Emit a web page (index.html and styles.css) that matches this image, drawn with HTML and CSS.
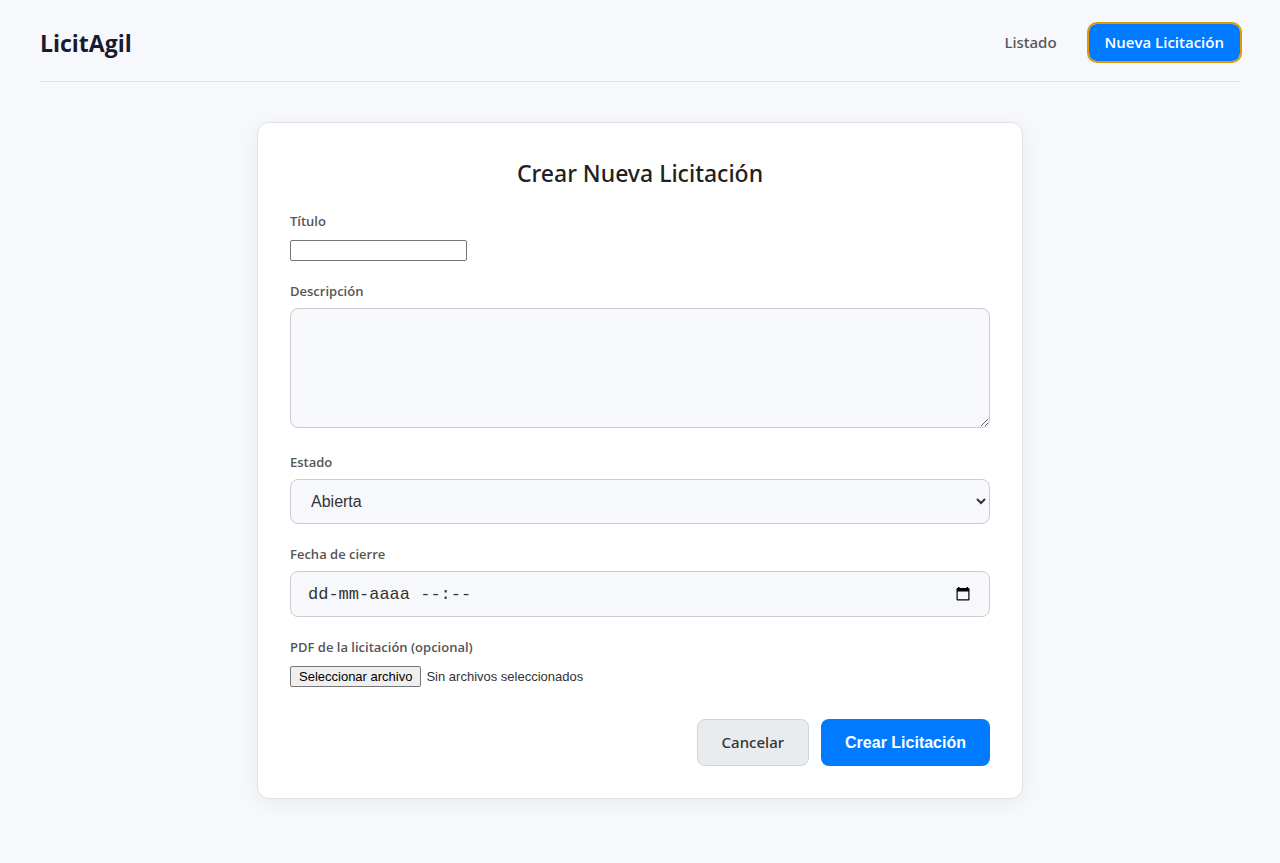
FILE: index.html
```html
<!DOCTYPE html>
<html lang="es">
<head>
<meta charset="utf-8">
<meta name="viewport" content="width=device-width, initial-scale=1">
<title>LicitAgil</title>
<link rel="stylesheet" href="styles.css">
</head>
<body>
<header class="header">
  <h1 class="logo">LicitAgil</h1>
  <nav class="nav">
    <a class="nav-link" href="#listado">Listado</a>
    <a class="nav-link nav-link-primary" href="#nueva">Nueva Licitación</a>
  </nav>
</header>
<main class="card">
  <h2 class="card-title">Crear Nueva Licitación</h2>
  <form class="form">
    <div class="field">
      <label class="label" for="titulo">Título</label>
      <div class="inline-control"><input class="plain-input" id="titulo" type="text"></div>
    </div>
    <div class="field">
      <label class="label" for="descripcion">Descripción</label>
      <textarea class="control textarea" id="descripcion"></textarea>
    </div>
    <div class="field">
      <label class="label" for="estado">Estado</label>
      <select class="control select" id="estado">
        <option>Abierta</option>
        <option>Cerrada</option>
      </select>
    </div>
    <div class="field">
      <label class="label" for="fecha">Fecha de cierre</label>
      <div class="control date">
        <input class="date-input" id="fecha" type="text" placeholder="dd-mm-aaaa --:--">
        <button class="date-button" type="button" aria-label="Abrir calendario">
          <svg width="16" height="16" viewBox="0 0 16 16" aria-hidden="true"><path fill-rule="evenodd" d="M3 1h1.500v1h7V1H13v1h.5a1 1 0 0 1 1 1v10.500a1 1 0 0 1-1 1h-11a1 1 0 0 1-1-1V3a1 1 0 0 1 1-1H3zM2.700 5.500v7.800h10.600V5.500z"/></svg>
        </button>
      </div>
    </div>
    <div class="field">
      <label class="label" for="pdf">PDF de la licitación (opcional)</label>
      <div class="inline-control file">
        <input class="file-input" id="pdf" type="file" accept="application/pdf">
        <label class="file-button" for="pdf">Seleccionar archivo</label>
        <span>Sin archivos seleccionados</span>
      </div>
    </div>
    <div class="actions">
      <a class="button button-secondary" href="#listado">Cancelar</a>
      <button class="button button-primary" type="submit">Crear Licitación</button>
    </div>
  </form>
</main>
</body>
</html>
```
FILE: styles.css
```css
* {
  box-sizing: border-box;
}

body {
  margin: 0;
  padding: 0 40px 40px;
  background: #f7f8fc;
  color: #212529;
  font-family: "Segoe UI", "Noto Sans", "Open Sans", sans-serif;
}

.header {
  display: flex;
  justify-content: space-between;
  align-items: center;
  padding: 24px 0 20px;
  border-bottom: 1px solid #dee2e6;
}

.logo {
  margin: 0;
  font-family: "Segoe UI", "Open Sans", sans-serif;
  font-size: 23px;
  line-height: 36px;
  font-weight: 700;
  color: #1a1a2e;
}

.nav {
  display: flex;
  align-items: center;
  gap: 16px;
}

.nav-link {
  padding: 8px 16px;
  border-radius: 8px;
  color: #555;
  font-size: 15px;
  line-height: 21px;
  font-weight: 500;
  text-decoration: none;
}

.nav-link-primary {
  background: #007bff;
  color: #fff;
  font-family: "Segoe UI", "Open Sans", sans-serif;
  font-weight: 600;
  outline: 2px solid #e59700;
}

.card {
  max-width: 766px;
  margin: 40px auto 0;
  padding: 32px;
  background: #fff;
  border: 1px solid #dee2e6;
  border-radius: 12px;
  box-shadow: 0 4px 20px rgba(0, 0, 0, 0.06);
}

.card-title {
  margin: 0 0 20px;
  color: #212121;
  font-size: 23px;
  line-height: 36px;
  font-weight: 500;
  text-align: center;
}

.form {
  display: flex;
  flex-direction: column;
  gap: 20px;
}

.field {
  display: flex;
  flex-direction: column;
  gap: 7px;
}

.label {
  color: #555;
  font-family: "Segoe UI", "Open Sans", sans-serif;
  font-size: 13px;
  line-height: 20px;
  font-weight: 600;
}

.inline-control {
  display: flex;
  align-items: center;
  padding-top: 2px;
}

.plain-input {
  width: 177px;
  height: 21px;
  border: 1px solid #767676;
  border-radius: 2px;
}

.control {
  width: 100%;
  border: 1px solid #ccc;
  border-radius: 8px;
  background: #f7f8fc;
  color: #333;
  font: 16px "Liberation Sans", Arial, sans-serif;
}

.textarea {
  height: 120px;
  margin-bottom: 4px;
  padding: 12px 16px;
  resize: vertical;
}

.select {
  height: 45px;
  padding: 0 16px;
}

.date {
  display: flex;
  align-items: center;
  height: 46px;
  padding: 0 18px 0 17px;
}

.date-input {
  flex: 1;
  min-width: 0;
  padding: 0;
  border: 0;
  background: transparent;
  color: #333;
  font: 17px "Liberation Mono", "Courier New", monospace;
}

.date-input::placeholder {
  color: #333;
}

.date-button {
  display: flex;
  padding: 0;
  border: 0;
  background: transparent;
}

.file {
  gap: 5px;
  color: #333;
  font: 13px "Liberation Sans", Arial, sans-serif;
}

.file-input {
  position: absolute;
  width: 1px;
  height: 1px;
  opacity: 0;
}

.file-button {
  padding: 0 8px;
  border: 1px solid #767676;
  border-radius: 2px;
  background: #efefef;
  color: #000;
  line-height: 19px;
}

.actions {
  display: flex;
  justify-content: flex-end;
  gap: 12px;
  margin-top: 12px;
}

.button {
  padding: 12px 24px;
  border: 0;
  border-radius: 8px;
  line-height: 21px;
  text-decoration: none;
}

.button-secondary {
  border: 1px solid #ced4da;
  background: #e9ecef;
  color: #333;
  font-size: 15px;
  font-weight: 500;
}

.button-primary {
  background: #007bff;
  color: #fff;
  font-family: "Liberation Sans", Arial, sans-serif;
  font-size: 16px;
  font-weight: 700;
}
```
